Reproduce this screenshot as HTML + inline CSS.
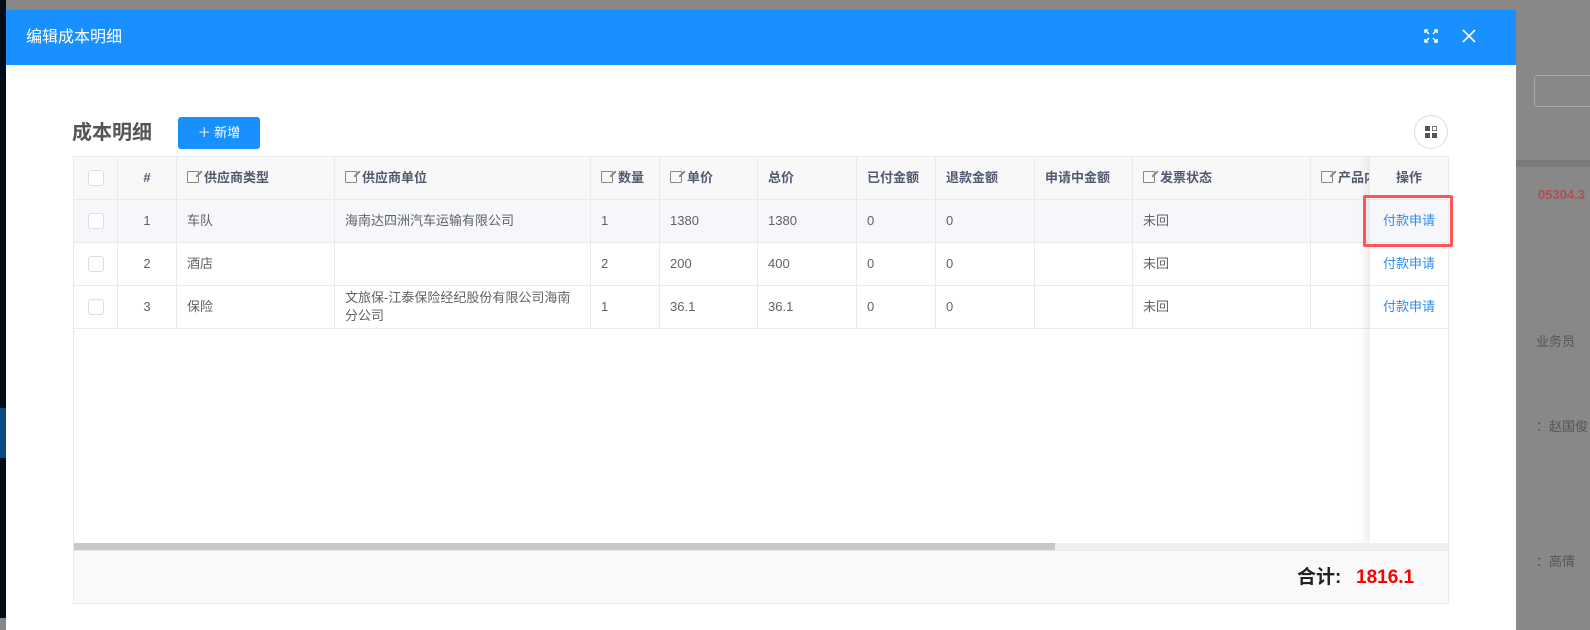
<!DOCTYPE html>
<html><head><meta charset="utf-8"><style>
*{box-sizing:border-box;margin:0;padding:0}
body{width:1590px;height:618px;overflow:hidden;background:#888;font-family:"Liberation Sans","Noto Sans CJK SC",sans-serif;position:relative}
.abs{position:absolute}
.modal{left:6px;top:10px;width:1510px;height:620px;background:#fff}
.hdr{left:0;top:0;width:1510px;height:55px;background:#1890ff;color:#fff;font-size:16px;line-height:55px;padding-left:20px}
table{border-collapse:collapse;table-layout:fixed;font-size:13px;color:#606266}
td,th{border:1px solid #e8eaec;height:43px;padding:0 10px;text-align:left;font-weight:normal;line-height:16px;overflow:hidden;white-space:nowrap}
th{background:#f8f8f9;color:#515a6e;font-weight:bold}
tr.r1 td{background:#f5f7fa}
.c{text-align:center}
.cb{display:inline-block;width:16px;height:16px;border:1px solid #dcdee2;border-radius:3px;background:#fff;vertical-align:middle}
.ed{display:inline-block;width:12px;height:12px;border:1.3px solid #888;border-radius:1px;margin-right:5px;vertical-align:-1px;position:relative}
.ed:after{content:"";position:absolute;right:-2px;top:-2px;width:2px;height:8px;background:#888;transform:rotate(45deg)}
.lk{color:#2d8cf0}
</style></head><body>
<div class="abs" style="left:0;top:0;width:6px;height:618px;background:#030d17"></div>
<div class="abs" style="left:0;top:408px;width:6px;height:50px;background:#0c4a83"></div>
<div class="abs" style="left:1534px;top:75px;width:60px;height:32px;border:1px solid #aaa;border-radius:3px"></div>
<div class="abs" style="left:1516px;top:160px;width:74px;height:7px;background:#7a7a7a"></div>
<div class="abs" style="left:1538px;top:187px;color:#b05050;font-size:13px;font-weight:bold">05304.3</div>
<div class="abs" style="left:1536px;top:331px;color:#555;font-size:13px">业务员</div>
<div class="abs" style="left:1536px;top:416px;color:#555;font-size:13px">：赵国俊</div>
<div class="abs" style="left:1536px;top:551px;color:#555;font-size:13px">：高倩</div>
<div class="abs modal">
 <div class="abs hdr">编辑成本明细</div>
 <svg class="abs" style="left:1418px;top:19px" width="14" height="14" viewBox="0 0 14 14" fill="none" stroke="#fff" stroke-width="1.5"><path d="M1 1l4 4M1 4V1h3M13 1l-4 4M13 4V1h-3M1 13l4-4M1 10v3h3M13 13l-4-4M13 10v3h-3"/></svg>
 <svg class="abs" style="left:1456px;top:19px" width="14" height="14" viewBox="0 0 14 14" stroke="#fff" stroke-width="1.6"><path d="M1 1l12 12M13 1L1 13"/></svg>
 <div class="abs" style="left:66px;top:106px;font-size:20px;font-weight:bold;color:#555">成本明细</div>
 <div class="abs" style="left:172px;top:107px;width:82px;height:32px;background:#1890ff;border-radius:3px;color:#fff;font-size:13px;line-height:32px;text-align:center">＋ 新增</div>
 <div class="abs" style="left:1408px;top:105px;width:34px;height:34px;border:1px solid #ddd;border-radius:50%"></div>
 <div class="abs" style="left:1419px;top:116px;width:5px;height:5px;background:#555"></div>
 <div class="abs" style="left:1426px;top:116px;width:5px;height:5px;border:1px dashed #777"></div>
 <div class="abs" style="left:1419px;top:123px;width:5px;height:5px;background:#555"></div>
 <div class="abs" style="left:1426px;top:123px;width:5px;height:5px;background:#555"></div>
 <div class="abs" style="left:67px;top:146px;width:1376px;height:448px;border:1px solid #e8eaec;overflow:hidden">
  <table class="abs" style="left:-1px;top:-1px;width:1380px">
   <colgroup><col style="width:44px"><col style="width:59px"><col style="width:158px"><col style="width:256px"><col style="width:69px"><col style="width:98px"><col style="width:99px"><col style="width:79px"><col style="width:99px"><col style="width:98px"><col style="width:178px"><col style="width:143px"></colgroup>
   <tr><th class="c"><span class="cb"></span></th><th class="c">#</th><th><span class="ed"></span>供应商类型</th><th><span class="ed"></span>供应商单位</th><th><span class="ed"></span>数量</th><th><span class="ed"></span>单价</th><th>总价</th><th>已付金额</th><th>退款金额</th><th>申请中金额</th><th><span class="ed"></span>发票状态</th><th><span class="ed"></span>产品内容</th></tr>
   <tr class="r1"><td class="c"><span class="cb"></span></td><td class="c">1</td><td>车队</td><td>海南达四洲汽车运输有限公司</td><td>1</td><td>1380</td><td>1380</td><td>0</td><td>0</td><td></td><td>未回</td><td></td></tr>
   <tr><td class="c"><span class="cb"></span></td><td class="c">2</td><td>酒店</td><td></td><td>2</td><td>200</td><td>400</td><td>0</td><td>0</td><td></td><td>未回</td><td></td></tr>
   <tr><td class="c"><span class="cb"></span></td><td class="c">3</td><td>保险</td><td style="white-space:normal;line-height:18px">文旅保-江泰保险经纪股份有限公司海南分公司</td><td>1</td><td>36.1</td><td>36.1</td><td>0</td><td>0</td><td></td><td>未回</td><td></td></tr>
  </table>
  <div class="abs" style="left:1296px;top:0;width:80px;height:386px;background:#fff;box-shadow:-4px 0 8px rgba(0,0,0,0.08)">
   <table style="width:80px;margin-left:-1px;margin-top:-1px"><tr><th class="c">操作</th></tr><tr class="r1"><td class="c lk">付款申请</td></tr><tr><td class="c lk">付款申请</td></tr><tr><td class="c lk">付款申请</td></tr></table>
  </div>
  <div class="abs" style="left:0;top:386px;width:1376px;height:7px;background:#efefef"></div>
  <div class="abs" style="left:0;top:386px;width:981px;height:7px;background:#c8c8ca"></div>
  <div class="abs" style="left:0;top:393px;width:1376px;height:55px;background:#f9f9f9;border-top:1px solid #e8eaec"></div>
  <div class="abs" style="left:1223px;top:409px;font-size:19px;line-height:24px;font-weight:bold;color:#222">合计:</div>
  <div class="abs" style="left:1282px;top:409px;font-size:19px;line-height:24px;font-weight:bold;color:#f00">1816.1</div>
 </div>
 <div class="abs" style="left:1357px;top:185px;width:90px;height:52px;border:3px solid #f55;border-radius:2px"></div>
</div>
</body></html>
